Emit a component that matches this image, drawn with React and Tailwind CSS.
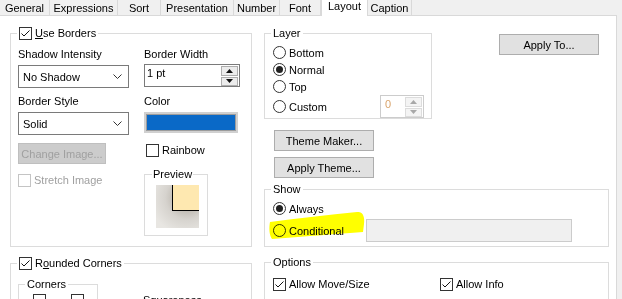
import React from 'react';

const Check = ({ checked, disabled }) => (
    <span className={`w-[13px] h-[13px] border bg-white flex items-center justify-center shrink-0 ${disabled ? 'border-[#c4c4c4]' : 'border-[#333333]'}`}>
        {checked && (
            <svg width="11" height="11" viewBox="0 0 11 11">
                <path d="M1.5 5.5L4 8L9.5 2.5" fill="none" stroke="#111" strokeWidth="1" />
            </svg>
        )}
    </span>
);

const Radio = ({ on }) => (
    <span className="w-[13px] h-[13px] rounded-full border border-[#333333] flex items-center justify-center shrink-0">
        {on && <span className="w-[7px] h-[7px] rounded-full bg-[#222]" />}
    </span>
);

const Chevron = () => (
    <svg width="9" height="5" viewBox="0 0 9 5" className="shrink-0">
        <path d="M0.5 0.5L4.5 4.5L8.5 0.5" fill="none" stroke="#333" strokeWidth="1" />
    </svg>
);

const Select = ({ value }) => (
    <div className="w-[111px] h-[23px] border border-[#7a7a7a] bg-white flex items-center pl-[4px] pr-[6px]">
        <span className="flex-1">{value}</span>
        <Chevron />
    </div>
);

const SpinButtons = ({ disabled }) => (
    <div className="flex flex-col w-[17px] gap-px">
        {['up', 'down'].map((dir) => (
            <div key={dir} className={`h-[10px] border flex items-center justify-center ${disabled ? 'border-[#dcdcdc] bg-[#f4f4f4]' : 'border-[#adadad] bg-[#ececec]'}`}>
                <svg width="7" height="4" viewBox="0 0 7 4">
                    <path d={dir === 'up' ? 'M0 4L3.5 0L7 4Z' : 'M0 0L3.5 4L7 0Z'} fill={disabled ? '#a8a8a8' : '#111'} />
                </svg>
            </div>
        ))}
    </div>
);

const Button = ({ children, className = '' }) => (
    <div className={`h-[21px] w-[100px] shrink-0 border border-[#adadad] bg-[#e1e1e1] flex items-center justify-center ${className}`}>
        {children}
    </div>
);

const tabs = [
    { name: 'General', w: 'w-[50px]' },
    { name: 'Expressions', w: 'w-[68px]' },
    { name: 'Sort', w: 'w-[43px]' },
    { name: 'Presentation', w: 'w-[73px]' },
    { name: 'Number', w: 'w-[46px]' },
    { name: 'Font', w: 'w-[41px]' },
    { name: 'Layout', w: 'w-[47px]', active: true },
    { name: 'Caption', w: 'w-[44px]' },
];

export default function App() {
    return (
        <div className="relative w-[622px] h-[299px] overflow-hidden bg-[#f0f0f0] text-[11px] leading-[14px] text-black font-['Liberation_Sans',Arial,sans-serif]">
            {/* Tab strip */}
            <div className="flex items-end h-[16px] w-[617px] border-b border-[#d9d9d9]">
                {tabs.map((tab) =>
                    tab.active ? (
                        <div key={tab.name} className={`${tab.w} h-[17px] -mb-px relative bg-white border-x border-[#d9d9d9] flex justify-center`}>
                            {tab.name}
                        </div>
                    ) : (
                        <div key={tab.name} className={`${tab.w} h-[15px] border-r border-[#d9d9d9] bg-[#f0f0f0] flex justify-center pt-[1px]`}>
                            {tab.name}
                        </div>
                    )
                )}
            </div>

            {/* Page */}
            <div className="w-[617px] h-[283px] bg-white border-r border-[#d9d9d9] flex pt-[10px] pl-[10px]">
                {/* Left column */}
                <div className="w-[242px] shrink-0 flex flex-col">
                    <fieldset className="w-[242px] h-[221px] shrink-0 border border-[#dcdcdc]">
                        <legend className="ml-[6px] px-[2px] flex items-center gap-[3px]">
                            <Check checked />
                            <span><span className="underline">U</span>se Borders</span>
                        </legend>
                        <div className="flex pl-[7px]">
                            <div className="w-[126px] flex flex-col">
                                <span className="mt-[7px]">Shadow Intensity</span>
                                <div className="mt-[4px]"><Select value="No Shadow" /></div>
                                <span className="mt-[6px]">Border Style</span>
                                <div className="mt-[4px]"><Select value="Solid" /></div>
                                <div className="mt-[8px] w-[88px] h-[21px] border border-[#bfbfbf] bg-[#cccccc] text-[#a0a0a0] flex items-center justify-center">
                                    Change Image...
                                </div>
                                <div className="mt-[9px] flex items-center gap-[3px] text-[#a0a0a0]">
                                    <Check disabled />
                                    <span>Stretch Image</span>
                                </div>
                            </div>
                            <div className="flex flex-col">
                                <span className="mt-[7px]">Border Width</span>
                                <div className="mt-[3px] w-[96px] h-[23px] border border-[#7a7a7a] bg-white flex justify-between pl-[2px] pr-px pt-px">
                                    <span>1 pt</span>
                                    <SpinButtons />
                                </div>
                                <span className="mt-[7px]">Color</span>
                                <div className="mt-[4px] w-[94px] h-[21px] bg-[#d0d0d0] p-[2px]">
                                    <div className="h-full border border-[#9c9c9c] bg-[#0a69c7]" />
                                </div>
                                <div className="mt-[10px] pl-[2px] flex items-center gap-[3px]">
                                    <Check />
                                    <span>Rainbow</span>
                                </div>
                                <fieldset className="mt-[10px] w-[64px] h-[69px] shrink-0 border border-[#dcdcdc]">
                                    <legend className="ml-[7px] px-px">Preview</legend>
                                    <div className="ml-[11px] mt-[4px] w-[43px] h-[43px] flex flex-col bg-[radial-gradient(circle_at_72%_30%,#bdb8b0_25%,#d6d3ce_50%,#e8e6e2_85%)]">
                                        <div className="ml-[16px] w-[27px] h-[26px] bg-[#fee8b0] border-l border-b border-black" />
                                    </div>
                                </fieldset>
                            </div>
                        </div>
                    </fieldset>

                    <fieldset className="mt-[9px] w-[242px] h-[60px] shrink-0 border border-[#dcdcdc]">
                        <legend className="ml-[6px] px-[2px] flex items-center gap-[3px]">
                            <Check checked />
                            <span>R<span className="underline">o</span>unded Corners</span>
                        </legend>
                        <div className="flex pl-[7px]">
                            <fieldset className="mt-[7px] w-[80px] h-[40px] shrink-0 border border-[#dcdcdc]">
                                <legend className="ml-[6px] px-[2px]">Corners</legend>
                                <div className="mt-[3px] ml-[14px] flex gap-[25px]">
                                    <Check />
                                    <Check />
                                </div>
                            </fieldset>
                            <span className="ml-[45px] mt-[23px]">Squareness</span>
                        </div>
                    </fieldset>
                </div>

                {/* Right column */}
                <div className="ml-[12px] w-[345px] shrink-0 flex flex-col">
                    <div className="flex items-start shrink-0">
                        <fieldset className="w-[168px] h-[93px] shrink-0 border border-[#dcdcdc]">
                            <legend className="ml-[6px] px-[2px]">Layer</legend>
                            <div className="mt-[4px] flex flex-col">
                                {['Bottom', 'Normal', 'Top'].map((label) => (
                                    <div key={label} className="h-[17px] pl-[8px] flex items-center gap-[3px]">
                                        <Radio on={label === 'Normal'} />
                                        <span>{label}</span>
                                    </div>
                                ))}
                                <div className="pl-[8px] pr-[7px] flex items-center gap-[3px]">
                                    <Radio />
                                    <span>Custom</span>
                                    <div className="ml-auto w-[44px] h-[23px] border border-[#cccccc] bg-white flex justify-between pl-[4px] pr-px pt-px text-[#d9a46c]">
                                        <span>0</span>
                                        <SpinButtons disabled />
                                    </div>
                                </div>
                            </div>
                        </fieldset>
                        <Button className="mt-[8px] ml-[67px]">Apply To...</Button>
                    </div>

                    <Button className="mt-[11px] ml-[10px]">Theme Maker...</Button>
                    <Button className="mt-[6px] ml-[10px]">Apply Theme...</Button>

                    <fieldset className="mt-[4px] w-[345px] h-[65px] shrink-0 border border-[#dcdcdc]">
                        <legend className="ml-[6px] px-[2px]">Show</legend>
                        <div className="mt-[4px] h-[17px] pl-[8px] flex items-center gap-[3px]">
                            <Radio on />
                            <span>Always</span>
                        </div>
                        <div className="mt-[2px] h-[23px] flex items-center">
                            <div className="w-[101px] pl-[8px] flex items-center gap-[3px]">
                                <Radio />
                                <span>Conditional</span>
                            </div>
                            <div className="w-[206px] h-[23px] border border-[#cccccc] bg-[#f0f0f0]" />
                        </div>
                    </fieldset>

                    <fieldset className="mt-[8px] w-[345px] h-[60px] shrink-0 border border-[#dcdcdc]">
                        <legend className="ml-[6px] px-[2px]">Options</legend>
                        <div className="mt-[8px] pl-[8px] flex">
                            <div className="w-[167px] flex items-center gap-[3px]">
                                <Check checked />
                                <span>Allow Move/Size</span>
                            </div>
                            <div className="flex items-center gap-[3px]">
                                <Check checked />
                                <span>Allow Info</span>
                            </div>
                        </div>
                    </fieldset>
                </div>
            </div>

            {/* highlighter mark */}
            <svg className="absolute left-[268px] top-[208px] mix-blend-multiply pointer-events-none" width="100" height="34" viewBox="0 0 100 34">
                <path d="M2 14 C30 10 60 7 89 4 C95 3 97 9 96 16 L95 24 C70 26 40 28 4 31 C1 27 1 19 2 14 Z" fill="#ffff00" />
            </svg>
        </div>
    );
}
